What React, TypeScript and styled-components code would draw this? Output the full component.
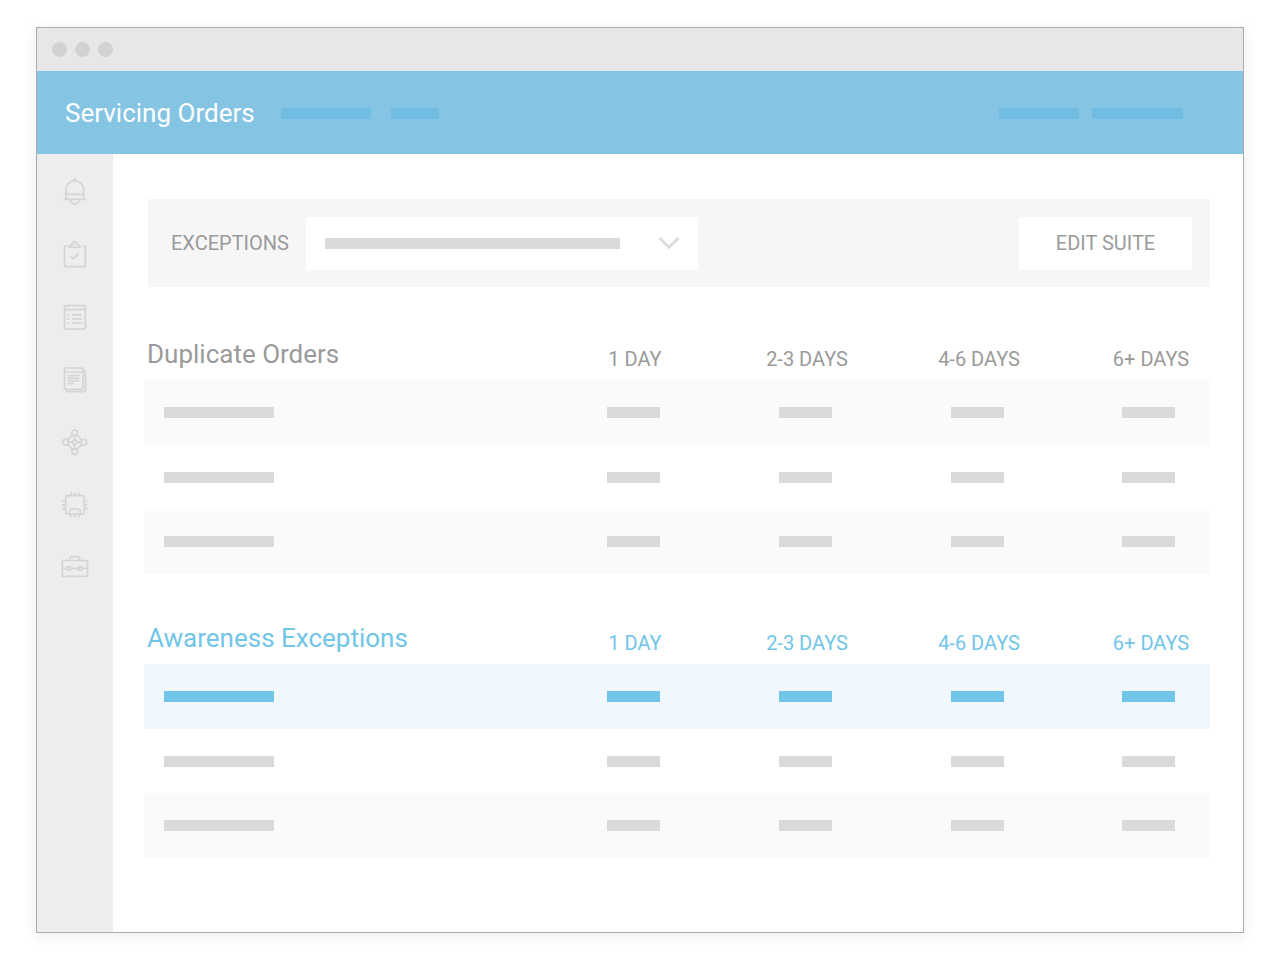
import React from "react";
import styled, { createGlobalStyle } from "styled-components";

const color = {
  frame: "#acacac",
  chrome: "#e7e7e7",
  dot: "#d0d2d3",
  header: "#86c4e4",
  headerBar: "#70bce2",
  rail: "#ededed",
  railIcon: "#d3d5d5",
  panel: "#f6f6f6",
  stripe: "#fafafa",
  highlight: "#f0f8fe",
  bar: "#d8dadc",
  text: "#9a9a9a",
  accent: "#70c5e8",
};

const GlobalStyle = createGlobalStyle`
  *, *::before, *::after { box-sizing: border-box; }
  body {
    margin: 0;
    background: #fff;
    color: ${color.text};
    font-family: Roboto, "Liberation Sans", sans-serif;
  }
`;

const Page = styled.div`
  display: flex;
  min-height: 100vh;
  padding: 27px 36px;
`;

const Window = styled.div`
  display: flex;
  flex: 1;
  flex-direction: column;
  min-width: 0;
  background: #fff;
  border: 1px solid ${color.frame};
  box-shadow: 0 3px 14px rgba(0, 0, 0, 0.08);
`;

const TitleBar = styled.div`
  display: flex;
  align-items: center;
  gap: 8px;
  height: 43px;
  padding: 0 15px;
  background: ${color.chrome};
`;

const Dot = styled.span`
  width: 15px;
  height: 15px;
  border-radius: 50%;
  background: ${color.dot};
`;

const Header = styled.header`
  display: flex;
  align-items: center;
  justify-content: space-between;
  height: 83px;
  padding: 0 60px 0 28px;
  background: ${color.header};
`;

const Brand = styled.div`
  display: flex;
  align-items: center;
  gap: 26px;
`;

const AppTitle = styled.h1`
  margin: 0;
  color: #fff;
  font-size: 26px;
  font-weight: 400;
  line-height: 32px;
`;

const Nav = styled.nav<{ $gap: number }>`
  display: flex;
  align-items: center;
  gap: ${(p) => p.$gap}px;
  padding-top: 2px;
`;

const NavLink = styled.a<{ $width: number }>`
  width: ${(p) => p.$width}px;
  height: 11px;
  background: ${color.headerBar};
`;

const Body = styled.div`
  display: flex;
  flex: 1;
`;

const Rail = styled.nav`
  flex: none;
  width: 76px;
  padding-top: 23px;
  background: ${color.rail};
`;

const RailList = styled.ul`
  display: flex;
  flex-direction: column;
  align-items: center;
  justify-content: space-between;
  height: 405px;
  margin: 0;
  padding: 0;
  list-style: none;
`;

const RailLink = styled.a`
  display: block;
  width: 30px;
  height: 30px;
  color: ${color.railIcon};

  svg {
    display: block;
  }
`;

const Main = styled.main`
  flex: 1;
  min-width: 0;
  padding: 45px 33px 30px 31px;
`;

const FilterBar = styled.form`
  display: flex;
  align-items: center;
  gap: 17px;
  height: 88px;
  margin: 0 0 33px 4px;
  padding: 0 18px 0 23px;
  background: ${color.panel};
`;

const FilterLabel = styled.label`
  font-size: 20px;
  line-height: 24px;
`;

const SelectBox = styled.div`
  display: grid;
  width: 392px;
  height: 53px;
  background: #fff;

  > * {
    grid-area: 1 / 1;
  }
`;

const Select = styled.select`
  width: 100%;
  height: 100%;
  padding: 0 20px;
  border: 0;
  background: transparent;
  color: inherit;
  font: inherit;
  appearance: none;
`;

const SelectFace = styled.div`
  display: flex;
  align-items: center;
  justify-content: space-between;
  padding: 0 18px 0 19px;
  color: ${color.bar};
  pointer-events: none;
`;

const EditButton = styled.button`
  width: 173px;
  height: 53px;
  margin-left: auto;
  padding: 0;
  border: 0;
  background: #fff;
  color: inherit;
  font-family: inherit;
  font-size: 20px;
  line-height: 24px;
`;

const Bar = styled.span<{ $width: number; $accent?: boolean }>`
  display: inline-block;
  width: ${(p) => p.$width}px;
  height: 11px;
  background: ${(p) => (p.$accent ? color.accent : color.bar)};
  vertical-align: middle;
`;

const Table = styled.table<{ $accent?: boolean }>`
  width: 100%;
  margin-bottom: 30px;
  border-collapse: collapse;
  table-layout: fixed;

  thead {
    color: ${(p) => (p.$accent ? color.accent : "inherit")};
  }
`;

const DayCol = styled.col<{ $last?: boolean }>`
  width: ${(p) => (p.$last ? 145 : 172)}px;
`;

const HeadRow = styled.tr`
  height: 60px;
`;

const TitleCell = styled.th`
  padding: 0 0 10px 3px;
  font-size: 26px;
  font-weight: 400;
  line-height: 32px;
  text-align: left;
  vertical-align: bottom;
`;

const DayHead = styled.th`
  padding: 0 0 9px;
  font-size: 20px;
  font-weight: 400;
  line-height: 24px;
  text-align: center;
  vertical-align: bottom;

  &:last-child {
    padding-left: 27px;
  }
`;

const Row = styled.tr<{ $tone: Tone }>`
  height: ${(p) => (p.$tone === "plain" ? 64 : 65)}px;
  background: ${(p) =>
    p.$tone === "highlight" ? color.highlight : p.$tone === "stripe" ? color.stripe : "#fff"};
`;

const NameCell = styled.td`
  padding: 0 0 0 20px;
  font-size: 0;
`;

const DayCell = styled.td`
  padding: 0 3px 0 0;
  font-size: 0;
  text-align: center;

  &:last-child {
    padding-left: 24px;
  }
`;

type Tone = "stripe" | "plain" | "highlight";

const days = ["1 DAY", "2-3 DAYS", "4-6 DAYS", "6+ DAYS"];

const sections: { title: string; accent?: boolean; rows: Tone[] }[] = [
  { title: "Duplicate Orders", rows: ["stripe", "plain", "stripe"] },
  { title: "Awareness Exceptions", accent: true, rows: ["highlight", "plain", "stripe"] },
];

const railItems: { label: string; art: React.ReactNode }[] = [
  {
    label: "Notifications",
    art: (
      <>
        <path d="M5.9 22V12.6a8.9 8.9 0 0 1 17.8 0V22" />
        <path d="M3.3 22.3h23M6 17.4h17.6M13.6 3.4a1.2 1.2 0 0 1 2.4 0" />
        <path d="M10.6 22.5a4.2 4.6 0 0 0 8.4 0" />
      </>
    ),
  },
  {
    label: "Tasks",
    art: (
      <>
        <path d="M7.6 6H5.2a.8.8 0 0 0-.8.8v19a.8.8 0 0 0 .8.8h19.3a.8.8 0 0 0 .8-.8v-19a.8.8 0 0 0-.8-.8H22" />
        <path d="M9.5 7.200c0-2 .9-2.700 2.700-2.900.1-1.700 1.200-2.700 2.500-2.700s2.400 1 2.500 2.700c1.800.2 2.700.9 2.700 2.900z" />
        <path d="M14.2 4.700h1M10.700 16.300l2.700 2.600 5.500-5.600" />
      </>
    ),
  },
  {
    label: "Lists",
    art: (
      <>
        <rect x="4.5" y="3.6" width="20.8" height="23.5" rx="1.6" />
        <path d="M4.5 7.6h20.8M12 12.9h9.6M12 16.9h9.6M12 20.8h9.6M7.300 12.9h1.800M7.300 16.9h1.800M7.300 20.8h1.800" />
      </>
    ),
  },
  {
    label: "Documents",
    art: (
      <>
        <rect x="4.5" y="3" width="18.6" height="21.3" rx="1.5" />
        <path d="M4.5 7h18.6M7.7 10.700h11.7M7.7 13.300h11.7M7.7 16h11.7M7.7 18.600h6.3" />
        <path d="M23.300 5.200h.6a1.5 1.5 0 0 1 1.5 1.5v18.5a1.5 1.5 0 0 1-1.5 1.5H7.700a1.500 1.500 0 0 1-1.500-1.500v-.8" />
      </>
    ),
  },
  {
    label: "Network",
    art: (
      <>
        <circle cx="14.7" cy="5.8" r="2.8" />
        <circle cx="5.4" cy="15.2" r="2.8" />
        <circle cx="24" cy="15.2" r="2.8" />
        <circle cx="14.7" cy="24.6" r="2.8" />
        <circle cx="14.7" cy="15.2" r="2.2" />
        <path d="M12.8 7.7l-5.5 5.6M16.6 7.7l5.5 5.6M12.8 22.7l-5.5-5.6M16.6 22.7l5.5-5.6" />
        <path d="M8.1 15.2h4.4M16.9 15.2h4.4M14.7 8.500V13M14.7 17.4v4.5" />
      </>
    ),
  },
  {
    label: "System",
    art: (
      <>
        <rect x="5.7" y="5.7" width="18.4" height="18.4" rx="1.6" />
        <path d="M11 5.5V2.3M14.8 5.5V2.3M18.6 5.5V2.3M11 24.3v3.2M14.8 24.3v3.2M18.6 24.3v3.2" />
        <path d="M5.5 11H2M5.5 14.8H2M5.5 18.6H2M24.3 11h3.3M24.3 14.8h3.3M24.3 18.6h3.3" />
        <path d="M9.6 24v-3.300a1.600 1.600 0 0 1 1.600-1.600h7.400a1.600 1.600 0 0 1 1.600 1.600V24" />
      </>
    ),
  },
  {
    label: "Toolbox",
    art: (
      <>
        <rect x="2.3" y="8.5" width="25.2" height="15.9" rx="1.4" />
        <path d="M10.2 8.300V6a1.300 1.300 0 0 1 1.300-1.300h6.800A1.300 1.300 0 0 1 19.600 6v2.300" />
        <path d="M2.3 16.300h4.8M10.5 16.300h8.2M22.100 16.300h5.4" />
        <rect x="7.2" y="14.8" width="3.2" height="3.1" rx=".5" />
        <rect x="18.8" y="14.8" width="3.2" height="3.1" rx=".5" />
      </>
    ),
  },
];

function OrdersTable({ title, accent, rows }: (typeof sections)[number]) {
  return (
    <Table $accent={accent}>
      <colgroup>
        <col />
        {days.map((day, i) => (
          <DayCol key={day} $last={i === days.length - 1} />
        ))}
      </colgroup>
      <thead>
        <HeadRow>
          <TitleCell scope="col">{title}</TitleCell>
          {days.map((day) => (
            <DayHead key={day} scope="col">
              {day}
            </DayHead>
          ))}
        </HeadRow>
      </thead>
      <tbody>
        {rows.map((tone, i) => (
          <Row key={i} $tone={tone}>
            <NameCell>
              <Bar $width={110} $accent={tone === "highlight"} />
            </NameCell>
            {days.map((day) => (
              <DayCell key={day}>
                <Bar $width={53} $accent={tone === "highlight"} />
              </DayCell>
            ))}
          </Row>
        ))}
      </tbody>
    </Table>
  );
}

export default function App() {
  return (
    <>
      <GlobalStyle />
      <Page>
        <Window>
          <TitleBar>
            <Dot />
            <Dot />
            <Dot />
          </TitleBar>
          <Header>
            <Brand>
              <AppTitle>Servicing Orders</AppTitle>
              <Nav $gap={20} aria-label="Primary">
                <NavLink href="#orders" aria-label="Orders" $width={90} />
                <NavLink href="#suites" aria-label="Suites" $width={48} />
              </Nav>
            </Brand>
            <Nav $gap={13} aria-label="Account">
              <NavLink href="#settings" aria-label="Settings" $width={80} />
              <NavLink href="#account" aria-label="Account" $width={91} />
            </Nav>
          </Header>
          <Body>
            <Rail aria-label="Sections">
              <RailList>
                {railItems.map(({ label, art }) => (
                  <li key={label}>
                    <RailLink href={`#${label.toLowerCase()}`} aria-label={label}>
                      <svg
                        width="30"
                        height="30"
                        viewBox="0 0 30 30"
                        fill="none"
                        stroke="currentColor"
                        strokeWidth="1.7"
                        aria-hidden="true"
                      >
                        {art}
                      </svg>
                    </RailLink>
                  </li>
                ))}
              </RailList>
            </Rail>
            <Main>
              <FilterBar>
                <FilterLabel htmlFor="exceptions">EXCEPTIONS</FilterLabel>
                <SelectBox>
                  <Select id="exceptions" defaultValue="">
                    <option value="" />
                  </Select>
                  <SelectFace aria-hidden="true">
                    <Bar $width={295} />
                    <svg width="22" height="14" viewBox="0 0 22 14" fill="none">
                      <path d="M1.7 2L11 11.3 20.3 2" stroke="currentColor" strokeWidth="2.6" />
                    </svg>
                  </SelectFace>
                </SelectBox>
                <EditButton type="button">EDIT SUITE</EditButton>
              </FilterBar>
              {sections.map((section) => (
                <OrdersTable key={section.title} {...section} />
              ))}
            </Main>
          </Body>
        </Window>
      </Page>
    </>
  );
}
